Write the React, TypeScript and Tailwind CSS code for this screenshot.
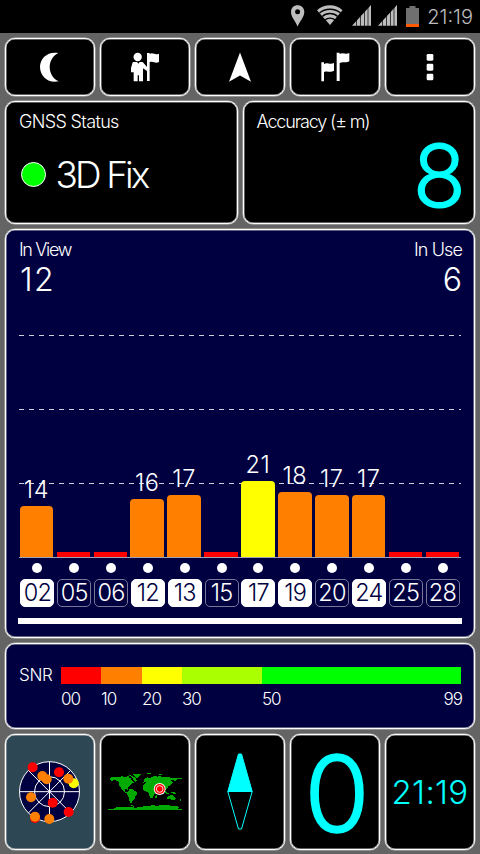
import type { ReactNode } from 'react';
import clsx from 'clsx';

const satellites = [
  { id: '02', snr: 14, height: 51, used: true },
  { id: '05', snr: 0, height: 5, used: false },
  { id: '06', snr: 0, height: 5, used: false },
  { id: '12', snr: 16, height: 58, used: true },
  { id: '13', snr: 17, height: 62, used: true },
  { id: '15', snr: 0, height: 5, used: false },
  { id: '17', snr: 21, height: 76, used: true },
  { id: '19', snr: 18, height: 65, used: true },
  { id: '20', snr: 17, height: 62, used: false },
  { id: '24', snr: 17, height: 62, used: true },
  { id: '25', snr: 0, height: 5, used: false },
  { id: '28', snr: 0, height: 5, used: false }
];

const skyDots = [
  { x: 98, y: 118, color: '#ff0000' },
  { x: 177, y: 133, color: '#ff0000' },
  { x: 127, y: 144, color: '#ff8000' },
  { x: 140, y: 154, color: '#ff8000' },
  { x: 221, y: 166, color: '#ffff00' },
  { x: 205, y: 152, color: '#ff8000' },
  { x: 93, y: 208, color: '#ff8000' },
  { x: 158, y: 224, color: '#ff0000' },
  { x: 206, y: 252, color: '#ff0000' },
  { x: 105, y: 270, color: '#ff0000' },
  { x: 105, y: 266, color: '#ff8000' },
  { x: 148, y: 273, color: '#ff8000' }
];

function Panel({ className, children }: { className?: string; children: ReactNode }) {
  return (
    <div className={clsx('rounded-[10px] border border-white text-white shadow-[0_0_0_0.5px_#c0c0c0,inset_0_0_0_0.5px_#c0c0c0]', className)}>
      {children}
    </div>
  );
}

function StatusBar() {
  return (
    <div className="flex h-[33px] items-center justify-end bg-black pr-[7px] text-[#bdbdbd]">
      <svg width="130" height="33" viewBox="0 0 130 33" className="mr-[7px]">
        <path d="M7 5.300C3.200 5.300.4 8 .4 12c0 5 4.700 9.500 6.600 14.500C9 21.500 13.700 17 13.700 12c0-4-3-6.700-6.700-6.700z" transform="translate(.6 0)" fill="#bdbdbd" />
        <circle cx="7.600" cy="11.700" r="2.500" fill="#000" />
        <path d="M27 10.300C34 3.700 46 3.700 52.500 10.300L40 25z" fill="#bdbdbd" />
        <path d="M29.500 13c5.500-5 15.500-5 21 0M32.300 16.500c4-4 11.400-4 15.400 0M35 20c2.500-2.500 7.500-2.500 10 0" fill="none" stroke="#000" strokeWidth="1.300" />
        <path d="M81 5v20.700H62z" fill="#bdbdbd" />
        <path d="M107 5v20.700H88z" fill="#bdbdbd" />
        <path d="M66.500 5v21M70.500 5v21M74.500 5v21M78 5v21M92.500 5v21M96.500 5v21M100.500 5v21M104 5v21" stroke="#000" strokeWidth=".7" />
        <path d="M116 8h3.500V6h6v2h3.500v19h-13z" fill="#707070" />
        <path d="M116 24h13v3h-13z" fill="#ff5a00" />
      </svg>
      <span className="text-[20px] leading-none">21:19</span>
    </div>
  );
}

function Toolbar() {
  const icons = [
    <svg key="moon" width="90" height="58" viewBox="15 24 270 174" className="shrink-0">
      <path d="M175 69c-30-6-55 14-55 42 0 29 26 50 56 43-33-15-38-66-1-85z" fill="#fff" />
    </svg>,
    <svg key="guide" width="90" height="58" viewBox="300 24 270 174" className="shrink-0">
      <g fill="#fff">
        <circle cx="413" cy="81" r="12.500" />
        <path d="M398 97q0-1 3-1h10l4 5 4-5h9l13 15v12l-12-8v39h-12v-18h-4v18h-12v-27h-8v-13z" />
        <path d="M441 69h8v84h-8zM449 72c10-7 15 5 28-1v25c-12 6-17-4-28 1z" />
      </g>
    </svg>,
    <svg key="arrow" width="90" height="58" viewBox="0 0 90 58" className="shrink-0">
      <path d="M45 14.500l11 29.200-11-6.200-11 6.200z" fill="#fff" />
    </svg>,
    <svg key="flags" width="90" height="58" viewBox="150 24 270 174" className="shrink-0">
      <g fill="#fff">
        <path d="M244 97h8v57h-8zM252 102c10-7 16 3 30-3v23c-13 7-18-1-30 4z" />
        <path d="M290 68h9v85h-9zM299 72c10-6 16 3 29-3v25c-12 7-17-1-29 5z" />
      </g>
    </svg>,
    <svg key="more" width="90" height="58" viewBox="435 24 270 174" className="shrink-0">
      <g fill="#fff">
        <rect x="560" y="72" width="20" height="20" rx="4" />
        <rect x="560" y="101" width="20" height="21" rx="4" />
        <rect x="560" y="131" width="20" height="20" rx="4" />
      </g>
    </svg>
  ];

  return (
    <div className="grid h-[58px] grid-cols-5 gap-[5px]">
      {icons.map((icon, i) => (
        <Panel key={i} className="flex items-center justify-center overflow-hidden bg-black">{icon}</Panel>
      ))}
    </div>
  );
}

function SatelliteChart() {
  return (
    <Panel className="h-[409px] bg-[#000040] px-[13px] pt-[10px]">
      <div className="flex justify-between text-[18px] leading-[20px]">
        <span className="tracking-[-1.350px]">In View</span>
        <span className="mr-[-1px] tracking-[-0.900px]">In Use</span>
      </div>
      <div className="mt-[7px] flex h-[26px] justify-between text-[32px] leading-[26px]">
        <span className="ml-px tracking-[1.500px]">12</span>
        <span className="mr-[-1px]">6</span>
      </div>

      <div className="relative mt-[42px] h-[223px] border-b border-[#a0a0b8]">
        {/* Grid lines */}
        <div className="absolute inset-x-0 top-0 flex flex-col gap-[73px]">
          {[0, 1, 2].map((n) => (
            <div key={n} className="h-px bg-[repeating-linear-gradient(90deg,#d0d0dc_0_5px,transparent_5px_10px)]" />
          ))}
        </div>
        <div className="relative -ml-px grid h-full grid-cols-12 items-end">
          {satellites.map((sat) => (
            <div key={sat.id} className="flex flex-col items-center">
              {sat.snr > 0 && <span className="mb-[4px] text-[23.500px] leading-[24px] tracking-[0.600px]">{sat.snr}</span>}
              <div
                className={clsx(
                  'w-[33.500px]',
                  sat.snr === 0 ? 'bg-[#ff0000]' : sat.snr > 20 ? 'rounded-t-[4px] bg-[#ffff00]' : 'rounded-t-[4px] bg-[#ff8000]'
                )}
                style={{ height: sat.height }}
              />
            </div>
          ))}
        </div>
      </div>

      <div className="mt-[5px] grid grid-cols-12 justify-items-center">
        {satellites.map((sat) => (
          <div key={sat.id} className="flex flex-col items-center gap-[6px]">
            <div className="size-[10px] rounded-full bg-white" />
            <div
              className={clsx(
                'flex h-[28px] w-[34px] items-center justify-center rounded-[5px] border text-[23.500px] leading-none tracking-[-0.700px]',
                sat.used ? 'border-white bg-white text-[#000040]' : 'border-[#77779a] text-white'
              )}
            >
              {sat.id}
            </div>
          </div>
        ))}
      </div>
      <div className="-mx-px mt-[11px] h-[6px] bg-white" />
    </Panel>
  );
}

function SnrLegend() {
  return (
    <Panel className="flex h-[86px] bg-[#000040] px-[13px] pt-[23px] text-[17px] tracking-[-1px]">
      <span className="w-[42px] tracking-[-0.300px] leading-[16px]">SNR</span>
      <div className="flex-1">
        <div className="flex h-[17px]">
          <div className="w-[40px] bg-[#ff0000]" />
          <div className="w-[41px] bg-[#ff8000]" />
          <div className="w-[40px] bg-[#ffff00]" />
          <div className="w-[80px] bg-[#aaff00]" />
          <div className="flex-1 bg-[#00ff00]" />
        </div>
        <div className="mt-[7px] flex leading-[17px]">
          <span className="w-[40px]">00</span>
          <span className="w-[41px]">10</span>
          <span className="w-[40px]">20</span>
          <span className="w-[80px]">30</span>
          <span>50</span>
          <span className="mr-[-1px] ml-auto">99</span>
        </div>
      </div>
    </Panel>
  );
}

function SkyView() {
  return (
    <svg width="90" height="116" viewBox="15 18 270 348" className="shrink-0">
      <circle cx="148.500" cy="191" r="90" fill="#000040" stroke="#fff" strokeWidth="3" />
      <circle cx="148.500" cy="191" r="45" fill="none" stroke="#fff" strokeWidth="3" />
      <path d="M58 191h181M148.500 101v180M85 127l127 128M85 255l127-128" stroke="#fff" strokeWidth="3" />
      {skyDots.map((dot, i) => (
        <circle key={i} cx={dot.x} cy={dot.y} r="15" fill={dot.color} />
      ))}
    </svg>
  );
}

function WorldMap() {
  return (
    <svg width="90" height="116" viewBox="300 18 270 348" className="shrink-0">
      <g fill="#00aa00" shapeRendering="crispEdges">
        {/* Americas */}
        <path d="M333 147h29v-4h6v4h12v-3h8v5h8l-4 6 6 3 5 6-7 3-4 5-5 2-4 6 1 6-5-4-6 3 2 6 6 2 5 5-8-3-9-7-6-8-5-7-1-9-6-6-8-2-10 5v-5h-5z" />
        <path d="M387 140h6v3h7v4h-7v-2h-6zM397 148h7l7 9-3 6-7-5z" />
        <path d="M399 140l9-3h15v4l-5 5-7 5-4-5-5-1z" />
        <path d="M388 184l8-1 8 5 8 5-1 8-5 5-2 6-7 6-4 9-4-2-1-14-5-8-2-8 3-5z" />
        {/* Europe and Asia */}
        <path d="M433 154l8-6 6 2 8-2 7-4 12 2 5-3 9 5 10-2 16 3h33v4h-15l-6 6-4-4-9 2 5 6-6 7-4 6-3-1-1 5-8 6-2 7-7-9-5-1-3 9-6-9-6 1-7-7-7 2-7-3-4-3-9 4-5-4 4-5 5-4-1-5-6 6z" />
        <path d="M442 136h10v3h-10zM478 139l8-3v3l-7 3z" />
        {/* Africa */}
        <path d="M429 172l9-6 12 3 11 1 5 9 8 3-8 9-3 10-6 10-5 1-5-12-2-8-9-2-8-5z" />
        <path d="M467 201h4v6l-3 4h-2z" />
        {/* Oceania */}
        <path d="M491 188h5l4 6 9 1-2 4-11-3zM512 193h12l5 4h-9zM502 207l8-5h5l5 1 7 8-1 5-8 1-7-4-8 2z" />
        <path d="M521 151l5 4-3 6-3-5zM540 214h4v6h-5zM431 155h4v5h-4z" />
        {/* Antarctica */}
        <path d="M323 243h17l10-5 16-2 24 2 12-3v5l14-2 20-4 21-2 16 1 13-2 19 1 14 2 16 1 2 3-5 5h14v3H323z" />
        <path d="M392 231h6v4h-6z" />
      </g>
      <circle cx="479" cy="183" r="18" fill="#fff" />
      <circle cx="479" cy="183" r="15" fill="#ff0000" />
      <circle cx="479" cy="183" r="10" fill="none" stroke="#fff" strokeWidth="2.500" />
    </svg>
  );
}

export default function App() {
  return (
    <div className="h-[854px] w-[480px] bg-[#646464] font-['Inter',sans-serif] font-light">
      <StatusBar />
      <div className="flex flex-col gap-[5px] px-[5px] pt-[5px]">
        <Toolbar />

        <div className="-mt-[0.500px] grid h-[123px] grid-cols-[233px_1fr] gap-[4.500px]">
          <Panel className="bg-black px-[13px] pt-[10px]">
            <div className="text-[18px] leading-[20px] tracking-[-0.650px]">GNSS Status</div>
            <div className="mt-[23px] flex items-center">
              <div className="ml-[1.500px] size-[25px] rounded-full border border-white bg-[#00ff00]" />
              <span className="ml-[10px] text-[37px] leading-[40px] tracking-[-2.900px]">3D Fix</span>
            </div>
          </Panel>
          <Panel className="flex flex-col bg-black pr-[12px] pl-[13px] pt-[10px]">
            <div className="text-[18px] leading-[20px] tracking-[-1.150px]">Accuracy (± m)</div>
            <div className="mt-[11px] mr-[-4px] self-end text-[87px] leading-[66px] text-[#00ffff] [-webkit-text-stroke:1.200px_#00ffff]">8</div>
          </Panel>
        </div>

        <SatelliteChart />
        <SnrLegend />

        <div className="grid h-[116px] grid-cols-5 gap-[5px]">
          <Panel className="flex items-center justify-center overflow-hidden bg-[#2d4754]"><SkyView /></Panel>
          <Panel className="flex items-center justify-center overflow-hidden bg-black"><WorldMap /></Panel>
          <Panel className="flex items-center justify-center bg-black">
            <svg width="26" height="78" viewBox="0 0 26 78">
              <path d="M.8 38.500L11.500 1h3L25.200 38.500z" fill="#00ffff" stroke="#00ffff" />
              <path d="M.8 38.500L11.500 76h3L25.200 38.500z" fill="none" stroke="#00ffff" />
            </svg>
          </Panel>
          <Panel className="flex items-center justify-center bg-black">
            <span className="mt-[4px] ml-[4px] text-[106px] leading-[80px] text-[#00ffff] [-webkit-text-stroke:1.500px_#00ffff]">0</span>
          </Panel>
          <Panel className="flex items-center justify-center bg-black">
            <span className="mt-[2px] text-[33px] leading-none tracking-[0.300px] text-[#00ffff]">21:19</span>
          </Panel>
        </div>
      </div>
    </div>
  );
}
